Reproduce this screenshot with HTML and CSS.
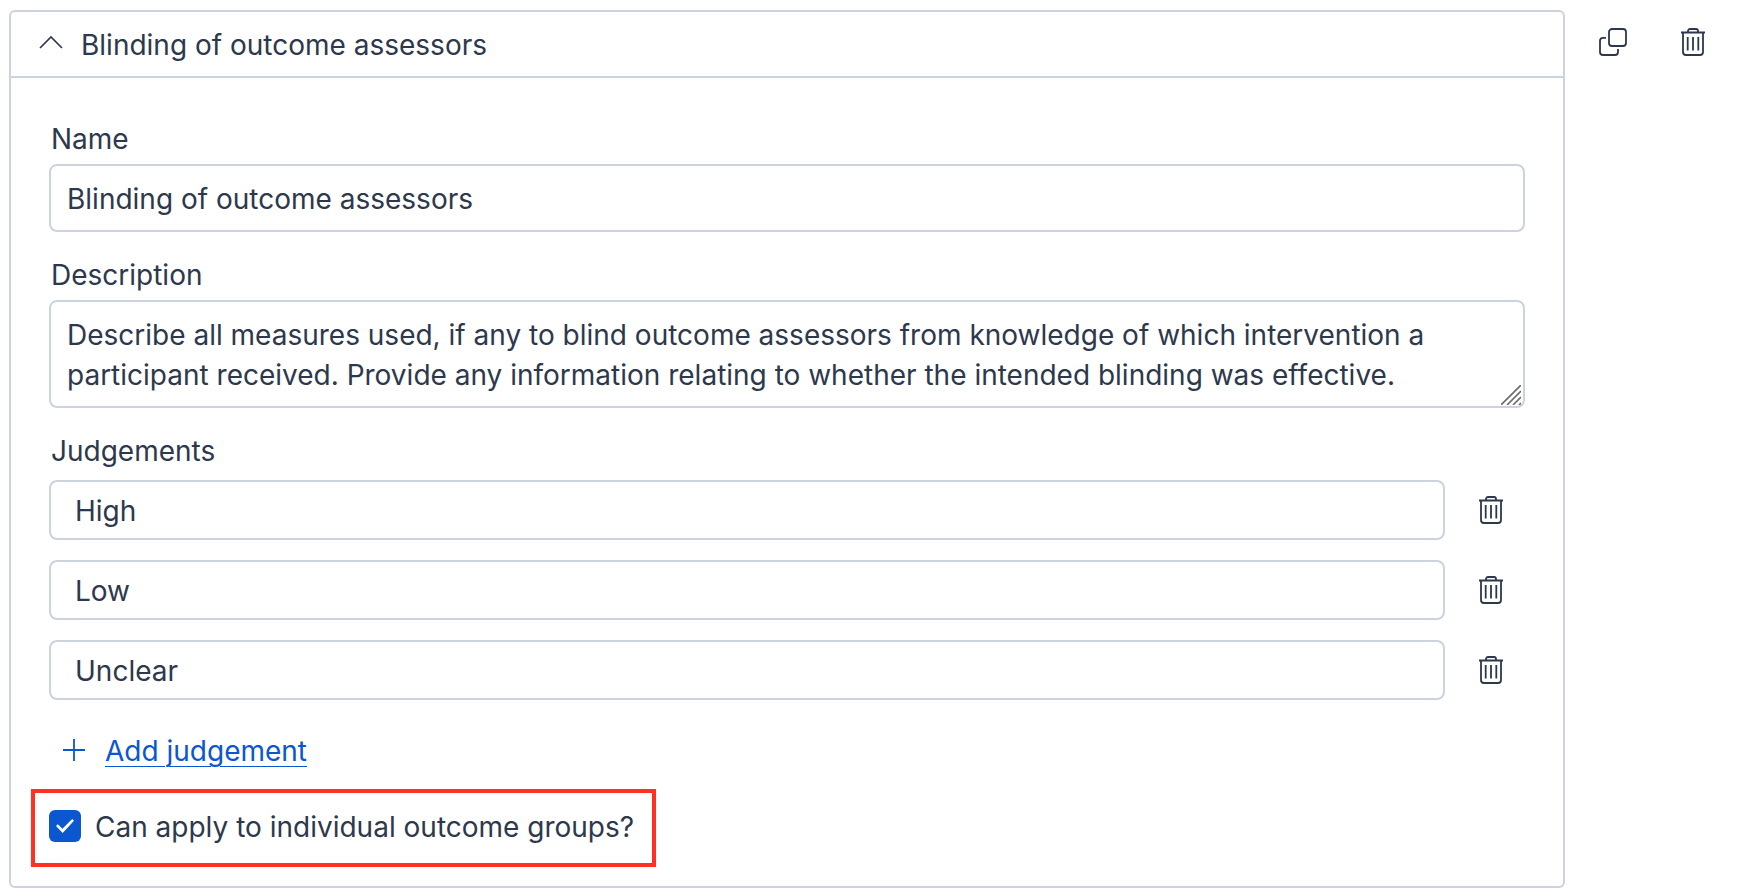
FILE: index.html
```
<!DOCTYPE html>
<html lang="en">
<head>
    <meta charset="UTF-8">
    <meta name="viewport" content="width=device-width, initial-scale=1.0">
    <title>Blinding of outcome assessors</title>
    <link rel="stylesheet" href="styles.css">
</head>
<body>
<!-- Shared icons -->
<svg class="sprite" aria-hidden="true">
    <symbol id="icon-trash" viewBox="0 0 28 28">
        <path d="M2 4.500h24M9 4.500V3a2 2 0 0 1 2-2h6a2 2 0 0 1 2 2v1.500M4 4.500V24a3 3 0 0 0 3 3h14a3 3 0 0 0 3-3V4.500M8.700 9v13.500M14 9v13.500M19.300 9v13.500"/>
    </symbol>
</svg>

<div class="domain">
    <section class="card">
        <header class="card-header">
            <button type="button" class="toggle" aria-expanded="true">
                <svg class="chevron" viewBox="0 0 24 14"><path d="M1 13L12 2l11 11"/></svg>
                <span>Blinding of outcome assessors</span>
            </button>
        </header>

        <form class="card-body">
            <div class="field">
                <label for="name">Name</label>
                <input type="text" id="name" class="control" value="Blinding of outcome assessors">
            </div>

            <div class="field">
                <label for="description">Description</label>
                <div class="textarea-wrap">
                    <textarea id="description" class="control" rows="2">Describe all measures used, if any to blind outcome assessors from knowledge of which intervention a participant received. Provide any information relating to whether the intended blinding was effective.</textarea>
                    <svg class="grip" viewBox="0 0 20 20"><path d="M0 20L20 0M6 20L20 6M12 20l8-8M18 20l2-2"/></svg>
                </div>
            </div>

            <fieldset class="judgements">
                <legend>Judgements</legend>
                <div class="judgement">
                    <input type="text" class="control" value="High" aria-label="Judgement 1">
                    <button type="button" class="icon-btn" aria-label="Delete High"><svg class="icon"><use href="#icon-trash"/></svg></button>
                </div>
                <div class="judgement">
                    <input type="text" class="control" value="Low" aria-label="Judgement 2">
                    <button type="button" class="icon-btn" aria-label="Delete Low"><svg class="icon"><use href="#icon-trash"/></svg></button>
                </div>
                <div class="judgement">
                    <input type="text" class="control" value="Unclear" aria-label="Judgement 3">
                    <button type="button" class="icon-btn" aria-label="Delete Unclear"><svg class="icon"><use href="#icon-trash"/></svg></button>
                </div>
            </fieldset>

            <a href="#" class="add-link">
                <svg class="plus" viewBox="0 0 22 22"><path d="M11 0v22M0 11h22"/></svg>
                <span>Add judgement</span>
            </a>

            <label class="apply">
                <input type="checkbox" checked>
                <span>Can apply to individual outcome groups?</span>
            </label>
        </form>
    </section>

    <div class="actions">
        <button type="button" class="icon-btn" aria-label="Duplicate">
            <svg class="icon" viewBox="0 0 28 28">
                <rect x="10" y="1" width="17" height="17" rx="3"/>
                <path d="M7 9.800H4a3 3 0 0 0-3 3V24a3 3 0 0 0 3 3h12a3 3 0 0 0 3-3v-3"/>
            </svg>
        </button>
        <button type="button" class="icon-btn" aria-label="Delete"><svg class="icon"><use href="#icon-trash"/></svg></button>
    </div>
</div>
</body>
</html>
```
FILE: styles.css
```
* {
    box-sizing: border-box;
}

body {
    margin: 0;
    padding: 10px 35px 8px 9px;
    background-color: #fff;
    color: #2d384d;
    font-family: Inter, "Liberation Sans", sans-serif;
    font-size: 28px;
    line-height: 40px;
}

input, textarea, button {
    font: inherit;
    color: inherit;
}

button {
    padding: 0;
    border: none;
    background: none;
    cursor: pointer;
}

svg {
    display: block;
    fill: none;
    stroke: currentColor;
}

.sprite {
    display: none;
}

.domain {
    display: flex;
    align-items: flex-start;
    gap: 24px;
}

.card {
    flex: 1;
    border: 2px solid #ccd3df;
    border-radius: 6px;
}

.card-header {
    border-bottom: 2px solid #ccd3df;
}

.toggle {
    display: flex;
    align-items: center;
    gap: 18px;
    width: 100%;
    padding: 13px 28px 11px;
    text-align: left;
}

.chevron {
    width: 24px;
    height: 14px;
    margin-bottom: 6px;
    stroke-width: 1.6;
}

.card-body {
    padding: 41px 38px 19px;
}

.field {
    margin-bottom: 23px;
}

.field label {
    display: block;
    margin-bottom: 5px;
    padding-left: 2px;
}

.control {
    display: block;
    width: 100%;
    height: 68px;
    padding: 13px 16px 11px;
    border: 2px solid #ccd3df;
    border-radius: 8px;
    background-color: #fff;
}

.textarea-wrap {
    position: relative;
}

textarea.control {
    height: 108px;
    resize: none;
    overflow: hidden;
}

/* Resize handle in the corner of the textarea */
.grip {
    position: absolute;
    right: 4px;
    bottom: 3px;
    width: 20px;
    height: 20px;
    color: #6b6b6b;
    stroke-width: 1.6;
}

.judgements {
    display: flex;
    flex-direction: column;
    gap: 20px;
    margin: 0;
    padding: 0;
    border: none;
}

.judgements legend {
    margin-bottom: 9px;
    padding: 0 0 0 2px;
}

.judgement {
    display: flex;
    align-items: center;
    gap: 22px;
    padding-right: 10px;
}

.judgement .control {
    flex: 1;
    height: 60px;
    padding: 9px 24px 7px;
}

.icon-btn {
    display: flex;
    align-items: center;
    justify-content: center;
    width: 48px;
    height: 48px;
}

.icon {
    width: 28px;
    height: 28px;
    stroke-width: 1.8;
}

.add-link {
    display: flex;
    align-items: center;
    gap: 20px;
    width: fit-content;
    margin: 31px 0 18px;
    padding-left: 14px;
    color: #0b57d0;
    text-decoration: none;
}

.add-link span {
    text-decoration: underline;
    text-decoration-thickness: 1px;
    text-underline-offset: 5px;
}

.plus {
    width: 22px;
    height: 22px;
    margin-bottom: 2px;
    stroke-width: 1.8;
}

.apply {
    display: flex;
    align-items: center;
    gap: 14px;
    width: fit-content;
    margin-left: -18px;
    padding: 14px 18px 16px 14px;
    border: 4px solid #ff3123;
}

.apply input {
    appearance: none;
    display: grid;
    place-items: center;
    width: 32px;
    height: 32px;
    margin: 0 0 2px;
    border-radius: 6px;
}

.apply input:checked {
    background-color: #0b57d0;
}

/* Tick mark */
.apply input:checked::before {
    content: "";
    width: 18px;
    height: 14px;
    background-color: #fff;
    clip-path: polygon(0 50%, 10% 38%, 36% 70%, 90% 0, 100% 12%, 37% 100%);
}

.actions {
    display: flex;
    gap: 32px;
    padding-top: 8px;
}
```
